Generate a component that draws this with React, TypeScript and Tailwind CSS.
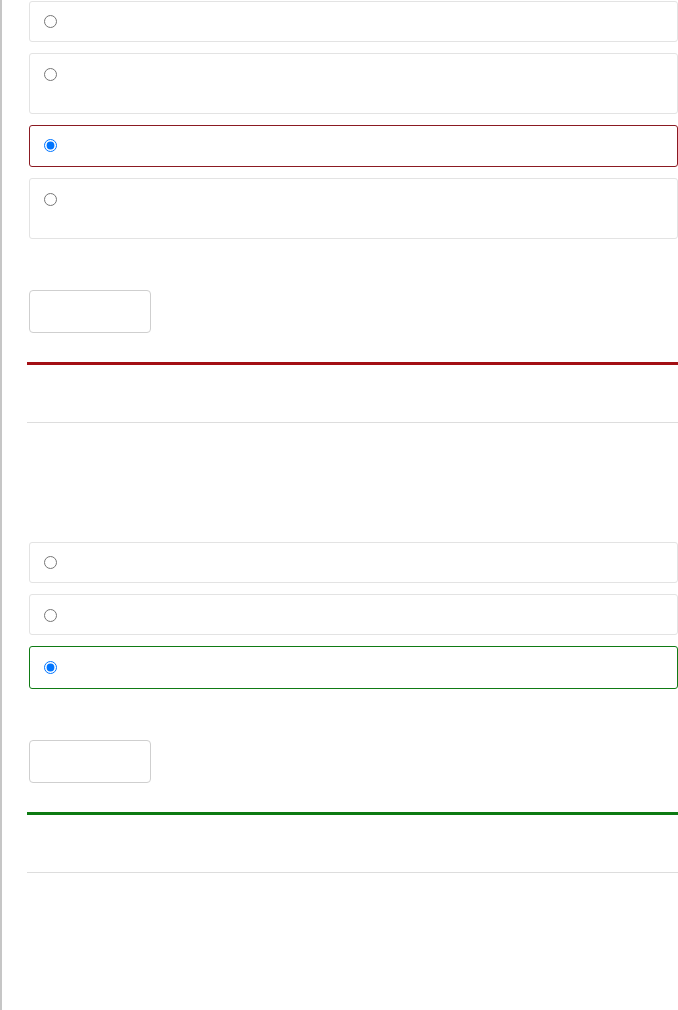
import React from "react";

function Option({ h, pt, checked, border }: { h: string; pt: string; checked?: boolean; border: string }) {
  return (
    <label className={`flex items-start ml-[2px] rounded-[3px] border ${border} ${h} pl-[14px] ${pt}`}>
      <input type="radio" defaultChecked={checked} className="m-0 w-[13px] h-[13px]" />
    </label>
  );
}

export default function App() {
  return (
    <div className="min-h-[1010px] w-[678px] bg-white border-l-2 border-[#c6c6c6] pl-[25px]" style={{ fontFamily: "'Liberation Sans', Arial, sans-serif" }}>
      <div className="pt-[1px] flex flex-col gap-[11px]">
        <Option h="h-[41px]" pt="pt-[13px]" border="border-[#e3e3e3]" />
        <Option h="h-[61px]" pt="pt-[14px]" border="border-[#e3e3e3]" />
        <Option h="h-[42px]" pt="pt-[13px]" checked border="border-[#8b1a22]" />
        <Option h="h-[61px]" pt="pt-[14px]" border="border-[#e3e3e3]" />
      </div>
      <div className="mt-[51px] ml-[2px] w-[122px] h-[43px] border border-[#cfcfcf] rounded-[4px]" />
      <div className="mt-[29px] h-[3px] bg-[#a30f14]" />
      <div className="mt-[57px] h-[1px] bg-[#dddddd]" />
      <div className="mt-[119px] flex flex-col gap-[11px]">
        <Option h="h-[41px]" pt="pt-[13px]" border="border-[#e3e3e3]" />
        <Option h="h-[41px]" pt="pt-[14px]" border="border-[#e3e3e3]" />
        <Option h="h-[43px]" pt="pt-[14px]" checked border="border-[#0f7b14]" />
      </div>
      <div className="mt-[51px] ml-[2px] w-[122px] h-[43px] border border-[#cfcfcf] rounded-[4px]" />
      <div className="mt-[29px] h-[3px] bg-[#0d7a12]" />
      <div className="mt-[57px] h-[1px] bg-[#dddddd]" />
    </div>
  );
}
